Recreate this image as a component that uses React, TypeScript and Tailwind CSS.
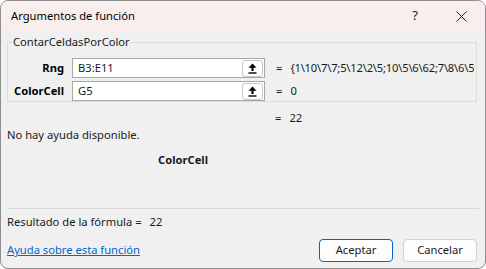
const font = { fontFamily: '"Noto Sans", "Open Sans", sans-serif' }

const UploadButton = () => (
    <div className="w-[21px] h-[17px] border border-[#c8c8c8] rounded-[3px] bg-white flex items-center justify-center">
        <svg width="9" height="11" viewBox="0 0 9 11">
            <path d="M4.5 0.5 L8.5 4.8 L5.6 4.8 L5.6 8 L3.4 8 L3.4 4.8 L0.5 4.8 Z" fill="#000" />
            <rect x="0.5" y="9.3" width="8" height="1.4" fill="#000" />
        </svg>
    </div>
)

const ArgRow = ({ label, value, result }: { label: string; value: string; result: string }) => (
    <div className="flex items-center h-[20px]">
        <div className="w-[56px] text-right font-bold text-[11.2px] text-black">{label}</div>
        <div className="ml-[8px] w-[193px] h-[20px] bg-white border border-[#a8a8a8] flex items-center justify-between pl-[5px] pr-[1px]">
            <span className="text-[11.2px]">{value}</span>
            <UploadButton />
        </div>
        <span className="ml-[11px] text-[11.2px]">=</span>
        <span className="ml-[8px] text-[11.2px] tracking-[-0.2px] whitespace-nowrap overflow-hidden w-[184px]">{result}</span>
    </div>
)

export default function App() {
    return (
        <div className="w-[486px] h-[269px] bg-white" style={font}>
            <div className="w-full h-full rounded-[8px] border border-[#8f8f8f] overflow-hidden flex flex-col bg-[#f0f0f0] text-[#1a1a1a]">
                <div className="h-[30px] bg-[#f8eeec] flex items-center pl-[10px] pr-[18px] shrink-0">
                    <span className="text-[11.2px] text-black">Argumentos de función</span>
                    <span className="ml-auto text-[13px] mr-[38px]">?</span>
                    <svg width="11" height="11" viewBox="0 0 11 11">
                        <path d="M0.5 0.5 L10.5 10.5 M10.5 0.5 L0.5 10.5" stroke="#222" strokeWidth="1" />
                    </svg>
                </div>
                <div className="flex-1 px-[6px] pt-[11px] flex flex-col">
                    <div className="relative border border-[#dcdcdc] h-[60px] w-[470px] pt-[15px] flex flex-col gap-[3px]">
                        <span className="absolute -top-[9px] left-[4px] px-[1px] bg-[#f0f0f0] text-[11.2px] leading-[16px]">ContarCeldasPorColor</span>
                        <ArgRow label="Rng" value="B3:E11" result="{1\10\7\7;5\12\2\5;10\5\6\62;7\8\6\5" />
                        <ArgRow label="ColorCell" value="G5" result="0" />
                    </div>
                    <div className="flex h-[18px] items-center mt-[7px] text-[11.2px]">
                        <span className="ml-[268px]">=</span>
                        <span className="ml-[8px]">22</span>
                    </div>
                    <div className="text-[11.2px] leading-[16px]">No hay ayuda disponible.</div>
                    <div className="text-[11.2px] font-bold mt-[9px] ml-[151px] leading-[16px]">ColorCell</div>
                    <div className="mt-[40px] border-t border-[#d8d8d8] w-[472px]" />
                    <div className="text-[11.2px] mt-[5px] leading-[16px]">
                        Resultado de la fórmula =<span className="ml-[8px]">22</span>
                    </div>
                    <div className="flex items-center mt-[9px]">
                        <a className="text-[11.2px] text-[#0066cc] underline">Ayuda sobre esta función</a>
                        <button className="ml-auto w-[74px] h-[23px] rounded-[4px] border border-[#0067c0] bg-[#fdfdfd] text-[11.2px]">Aceptar</button>
                        <button className="ml-[10px] mr-[2px] w-[74px] h-[23px] rounded-[4px] border border-[#d0d0d0] bg-[#fdfdfd] text-[11.2px]">Cancelar</button>
                    </div>
                </div>
            </div>
        </div>
    )
}
